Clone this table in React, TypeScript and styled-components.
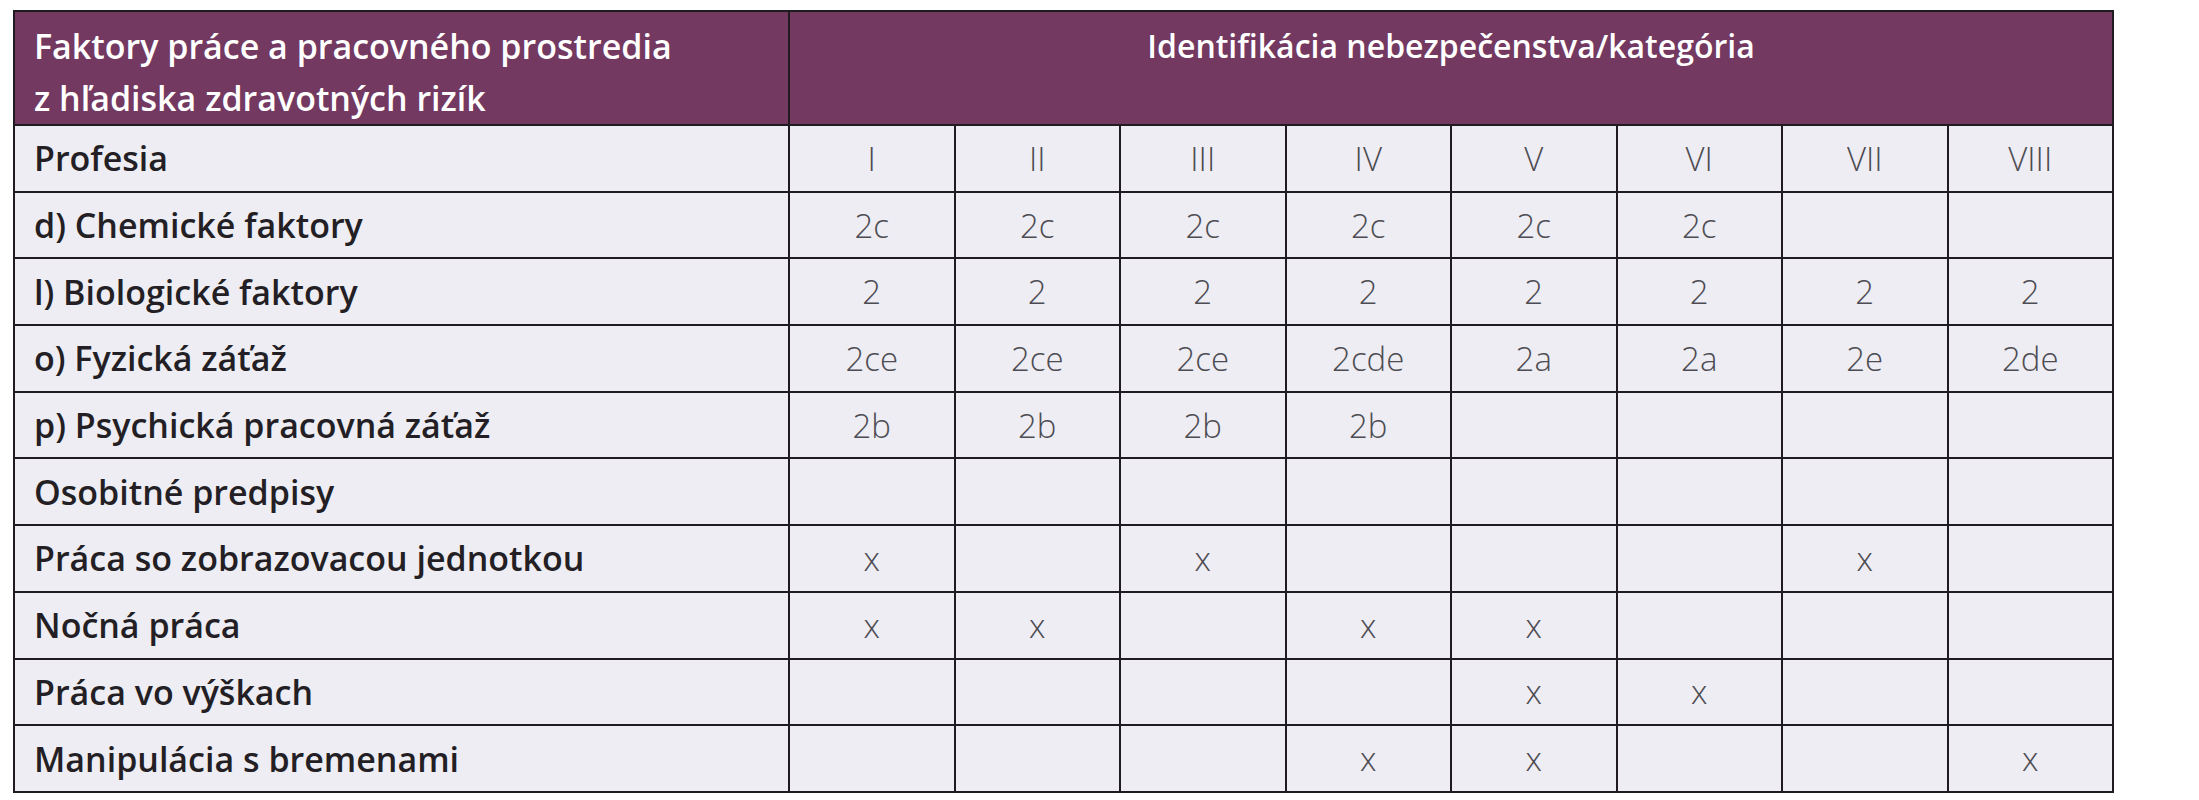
import React from "react";
import styled, { createGlobalStyle } from "styled-components";

const GlobalStyle = createGlobalStyle`
  html, body {
    margin: 0;
    padding: 0;
    background: #ffffff;
  }
  body {
    font-family: "Open Sans", "Liberation Sans", sans-serif;
  }
`;

const Page = styled.div`
  padding: 10px 0 0 13px;
`;

const Table = styled.table`
  border-collapse: collapse;
  table-layout: fixed;
  width: 2101px;
  background: #eeedf4;
`;

const HeadRow = styled.tr`
  height: 112px;
  background: #733961;
`;

const BodyRow = styled.tr`
  height: 66.7px;
`;

const HeadCell = styled.th<{ $center?: boolean }>`
  border: 2px solid #1f1b20;
  padding: 8px 19px 0;
  vertical-align: top;
  text-align: ${(p) => (p.$center ? "center" : "left")};
  color: #ffffff;
  font-weight: 600;
  font-size: ${(p) => (p.$center ? "32px" : "34px")};
  line-height: 52px;
  white-space: nowrap;
`;

const LabelCell = styled.td`
  border: 2px solid #1f1b20;
  padding: 0 19px;
  color: #231f24;
  font-weight: 600;
  font-size: 34px;
  white-space: nowrap;
`;

const ValueCell = styled.td`
  border: 2px solid #1f1b20;
  padding: 0;
  text-align: center;
  color: #4d4c52;
  font-weight: 300;
  font-size: 33px;
`;

const columns = ["I", "II", "III", "IV", "V", "VI", "VII", "VIII"];

const rows: { label: string; values: string[] }[] = [
  { label: "Profesia", values: columns },
  { label: "d) Chemické faktory", values: ["2c", "2c", "2c", "2c", "2c", "2c", "", ""] },
  { label: "l) Biologické faktory", values: ["2", "2", "2", "2", "2", "2", "2", "2"] },
  { label: "o) Fyzická záťaž", values: ["2ce", "2ce", "2ce", "2cde", "2a", "2a", "2e", "2de"] },
  { label: "p) Psychická pracovná záťaž", values: ["2b", "2b", "2b", "2b", "", "", "", ""] },
  { label: "Osobitné predpisy", values: ["", "", "", "", "", "", "", ""] },
  { label: "Práca so zobrazovacou jednotkou", values: ["x", "", "x", "", "", "", "x", ""] },
  { label: "Nočná práca", values: ["x", "x", "", "x", "x", "", "", ""] },
  { label: "Práca vo výškach", values: ["", "", "", "", "x", "x", "", ""] },
  { label: "Manipulácia s bremenami", values: ["", "", "", "x", "x", "", "", "x"] },
];

export default function App() {
  return (
    <Page>
      <GlobalStyle />
      <Table>
        <colgroup>
          <col style={{ width: 775 }} />
          {columns.map((c) => (
            <col key={c} />
          ))}
        </colgroup>
        <thead>
          <HeadRow>
            <HeadCell>
              Faktory práce a pracovného prostredia
              <br />z hľadiska zdravotných rizík
            </HeadCell>
            <HeadCell $center colSpan={8}>
              Identifikácia nebezpečenstva/kategória
            </HeadCell>
          </HeadRow>
        </thead>
        <tbody>
          {rows.map((row) => (
            <BodyRow key={row.label}>
              <LabelCell>{row.label}</LabelCell>
              {row.values.map((v, i) => (
                <ValueCell key={i}>{v}</ValueCell>
              ))}
            </BodyRow>
          ))}
        </tbody>
      </Table>
    </Page>
  );
}
